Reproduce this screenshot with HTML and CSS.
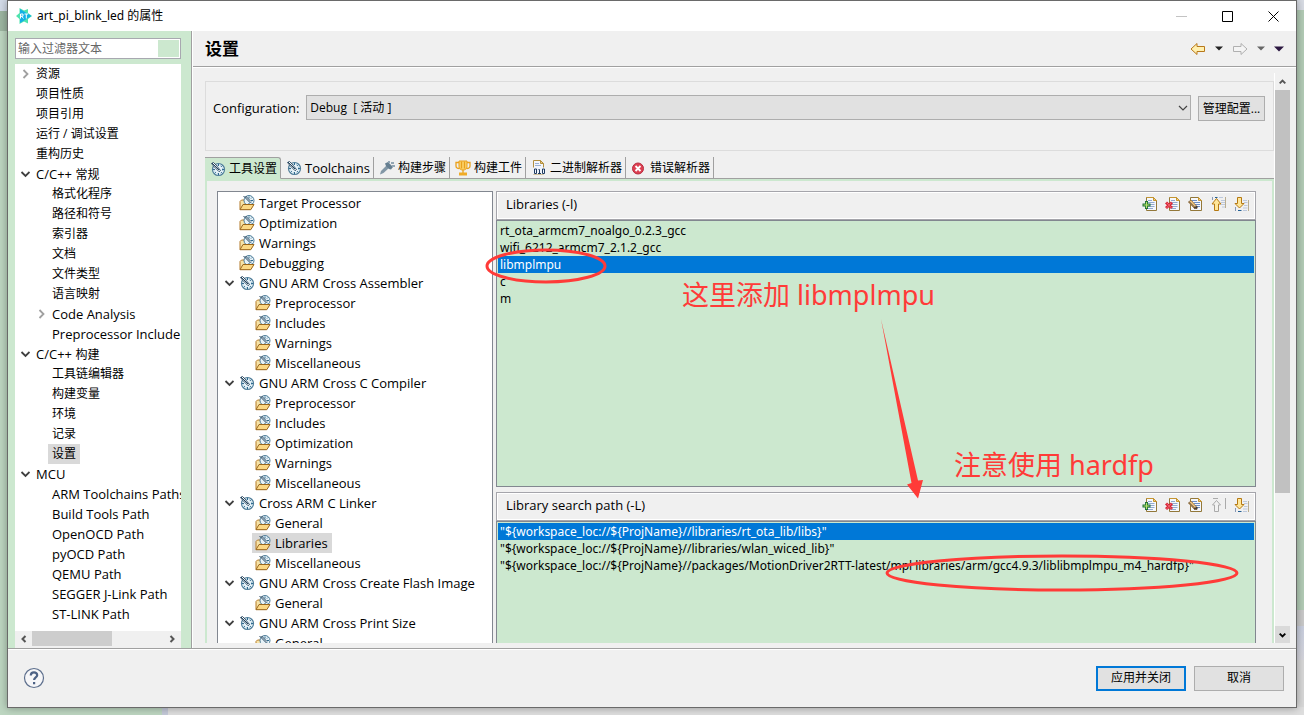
FILE: index.html
```html
<!DOCTYPE html>
<html lang="zh-CN">
<head>
<meta charset="utf-8">
<title>art_pi_blink_led 的属性</title>
<link rel="stylesheet" href="styles.css">
</head>
<body>
<svg class="defs" aria-hidden="true">
  <defs>
    <symbol id="i-tool" viewBox="0 0 16 16">
      <circle cx="8.500" cy="8.500" r="6" fill="#e6f2f8" stroke="#4f7d99" stroke-width="1.200" />
      <circle cx="8.500" cy="8.500" r="4.200" fill="none" stroke="#8db4ca" stroke-dasharray="1.500 1.500" />
      <path d="M8.500 3v2M14 8.500h-2M8.500 14v-2M3 8.500h2M12.400 4.600l-1.200 1.200M12.400 12.400l-1.200-1.200M4.600 12.400l1.200-1.200" stroke="#2f6b8f" />
      <path d="M1.500 2.500l2-1 2.500 2.500 4.500 5.500-1.500 1.200L4 5.500z" fill="#fff" stroke="#24435c" stroke-width=".9" />
      <path d="M2 2l7 7" stroke="#24435c" />
    </symbol>
    <symbol id="i-folder" viewBox="0 0 16 16">
      <path d="M1 14.500V6.500l1.500-1.500h3l1 2h5v7.500z" fill="#f7e3a7" stroke="#b47a28" />
      <circle cx="10" cy="5.500" r="5" fill="#e6f2f8" stroke="#4f7d99" />
      <path d="M10 1.500v2M14 5.500h-2M10 9.500v-1.500M13 2.500l-1 1M13 8.500l-1-1" stroke="#2f6b8f" />
      <path d="M4.500 1l7 7M6.500 1l5.500 5.500" stroke="#24435c" />
      <path d="M1 14.700L4 9.500h11l-3.200 5.200z" fill="#fbd884" stroke="#9b671e" />
    </symbol>
    <symbol id="i-doc" viewBox="0 0 16 16">
      <path d="M4.500 1.500h7l3 3v10h-10z" fill="#f5f8fd" stroke="#93783a" />
      <path d="M4.500 1.500h7l3 3" fill="none" stroke="#c59531" />
      <path d="M11.500 1.500v3h3z" fill="#f5cf7b" stroke="#c59531" />
      <path d="M6 4.500h4M6 6.500h6.500M6 8.500h6.500M6 10.500h6.500M6 12.500h5" stroke="#92a9cf" />
    </symbol>
    <symbol id="i-add" viewBox="0 0 16 16">
      <use href="#i-doc" />
      <path d="M3 5h3v2.500h2.500v3H6V13H3v-2.500H.5v-3H3z" fill="#1f7136" />
      <path d="M4.500 6v6M1.500 9h6" stroke="#b8e36b" stroke-width="1.200" />
    </symbol>
    <symbol id="i-del" viewBox="0 0 16 16">
      <use href="#i-doc" />
      <path d="M1 6.500l6 5.500M7 6.500l-6 5.500" stroke="#d72537" stroke-width="3" />
      <path d="M1.500 6.500l5 5.500M6.500 6.500l-5 5.500" stroke="#ef6670" />
    </symbol>
    <symbol id="i-edit" viewBox="0 0 16 16">
      <path d="M2.500 1.500h8l3 3v10h-11z" fill="#f5f8fd" stroke="#93783a" />
      <path d="M10.500 1.500v3h3z" fill="#f5cf7b" stroke="#c59531" />
      <path d="M4 4.500h5M6 6.500h6M7 8.500h5M8 10.500h4" stroke="#6f8ec2" />
      <path d="M.5 6L3 4l5 5.500 1 3-3-.5z" fill="#f0c47d" stroke="#8d6530" stroke-width=".8" />
      <path d="M1 5.500L7 11.500M6 12h3v-2z" stroke="#493e35" fill="#493e35" />
    </symbol>
    <symbol id="i-up" viewBox="0 0 16 16">
      <path d="M4 1.500h2.500" stroke="#225f93" />
      <path d="M8 1.500h4M10 4.500h4M10 6.500h4M10 8.500h4M11 11h3" stroke="#bcc8dc" />
      <path d="M14.500 1v11" stroke="#b9ad90" /><path d="M1.500 1v3" stroke="#8798b5" />
      <path d="M5.500 2.500L10 8H7.500v6.500h-4V8H1z" fill="#ffe79a" stroke="#b57912" />
    </symbol>
    <symbol id="i-down" viewBox="0 0 16 16">
      <path d="M4 14.500h3.500" stroke="#225f93" />
      <path d="M9 14.500h4M9 4.500h4M10 6.500h3.500M10 9.500h3.500M9 12h4.500" stroke="#bcc8dc" />
      <path d="M14.500 4v11" stroke="#b9ad90" /><path d="M1.500 11v4" stroke="#8798b5" />
      <path d="M5.500 12L10 7.500H7.500V1.500h-4v6H1z" fill="#ffe79a" stroke="#b57912" />
    </symbol>
    <symbol id="i-updis" viewBox="0 0 16 16">
      <path d="M2 1.500h5M14.500 1v11" stroke="#aaa" />
      <path d="M5.500 3.500L9.500 8H7.500v6.500h-4V8H1.500z" fill="#f2f2f2" stroke="#aaa" />
    </symbol>
    <symbol id="i-open" viewBox="0 0 10 10"><path d="M1.500 3l4 4 4-4" fill="none" stroke="#404040" stroke-width="1.800" /></symbol>
    <symbol id="i-closed" viewBox="0 0 10 10"><path d="M3.500 1l4 4-4 4" fill="none" stroke="#a0a0a0" stroke-width="1.800" /></symbol>
  </defs>
</svg>

<div class="window">
  <header class="titlebar">
    <svg class="logo" viewBox="0 0 16 16" aria-hidden="true">
      <path d="M3.500 0L8 2.500 12 1v4l4 3-4 3v4.500L8 13.500 3.500 16V11L0 8l3.500-3z" fill="#4fe3ae" />
      <path d="M4 1l11.500 7L4 15z" fill="#13b1e6" />
      <path d="M4.500 10.500V6h2.500v2.200H4.500M5.500 8l2 2.500M8.500 6h3.500M10.300 6v4.500" fill="none" stroke="#fff" />
    </svg>
    <span class="title">art_pi_blink_led 的属性</span>
    <div class="winbtns">
      <button class="winbtn" aria-label="最小化"><svg viewBox="0 0 11 11"><path d="M0 5.500h11" stroke="#c3c3c3" /></svg></button>
      <button class="winbtn" aria-label="最大化"><svg viewBox="0 0 11 11"><path d="M.5.500h10v10H.5z" fill="none" stroke="#000" /></svg></button>
      <button class="winbtn" aria-label="关闭"><svg viewBox="0 0 11 11"><path d="M.5.500l10 10M10.500.500l-10 10" stroke="#000" /></svg></button>
    </div>
  </header>

  <div class="middle">
    <nav class="sidebar">
      <div class="filter"><input type="text" placeholder="输入过滤器文本" aria-label="输入过滤器文本"><span class="clear"></span></div>
      <div class="pages">
        <ul class="tree">
          <li><div class="row zh"><svg class="tw"><use href="#i-closed" /></svg><span>资源</span></div></li>
          <li><div class="row zh"><span class="tw"></span><span>项目性质</span></div></li>
          <li><div class="row zh"><span class="tw"></span><span>项目引用</span></div></li>
          <li><div class="row zh"><span class="tw"></span><span>运行 / 调试设置</span></div></li>
          <li><div class="row zh"><span class="tw"></span><span>重构历史</span></div></li>
          <li><div class="row"><svg class="tw"><use href="#i-open" /></svg><span>C/C++ <span class="zh">常规</span></span></div>
            <ul>
              <li><div class="row zh"><span class="tw"></span><span>格式化程序</span></div></li>
              <li><div class="row zh"><span class="tw"></span><span>路径和符号</span></div></li>
              <li><div class="row zh"><span class="tw"></span><span>索引器</span></div></li>
              <li><div class="row zh"><span class="tw"></span><span>文档</span></div></li>
              <li><div class="row zh"><span class="tw"></span><span>文件类型</span></div></li>
              <li><div class="row zh"><span class="tw"></span><span>语言映射</span></div></li>
              <li><div class="row"><svg class="tw"><use href="#i-closed" /></svg><span>Code Analysis</span></div></li>
              <li><div class="row"><span class="tw"></span><span>Preprocessor Include</span></div></li>
            </ul>
          </li>
          <li><div class="row"><svg class="tw"><use href="#i-open" /></svg><span>C/C++ <span class="zh">构建</span></span></div>
            <ul>
              <li><div class="row zh"><span class="tw"></span><span>工具链编辑器</span></div></li>
              <li><div class="row zh"><span class="tw"></span><span>构建变量</span></div></li>
              <li><div class="row zh"><span class="tw"></span><span>环境</span></div></li>
              <li><div class="row zh"><span class="tw"></span><span>记录</span></div></li>
              <li><div class="row zh"><span class="tw"></span><span class="current">设置</span></div></li>
            </ul>
          </li>
          <li><div class="row"><svg class="tw"><use href="#i-open" /></svg><span>MCU</span></div>
            <ul>
              <li><div class="row"><span class="tw"></span><span>ARM Toolchains Paths</span></div></li>
              <li><div class="row"><span class="tw"></span><span>Build Tools Path</span></div></li>
              <li><div class="row"><span class="tw"></span><span>OpenOCD Path</span></div></li>
              <li><div class="row"><span class="tw"></span><span>pyOCD Path</span></div></li>
              <li><div class="row"><span class="tw"></span><span>QEMU Path</span></div></li>
              <li><div class="row"><span class="tw"></span><span>SEGGER J-Link Path</span></div></li>
              <li><div class="row"><span class="tw"></span><span>ST-LINK Path</span></div></li>
            </ul>
          </li>
        </ul>
        <div class="hscroll">
          <svg class="sarrow" viewBox="0 0 16 16"><path d="M10 5L7 8l3 3" /></svg>
          <span class="hthumb"></span>
          <svg class="sarrow" viewBox="0 0 16 16"><path d="M6 5l3 3-3 3" /></svg>
        </div>
      </div>
    </nav>

    <main class="page">
      <div class="pagehead">
        <h1>设置</h1>
        <div class="history">
          <button aria-label="后退"><svg width="16" height="14" viewBox="0 0 16 14"><path d="M1 7l6-5.500V4.500h7.500v5H7v3z" fill="#fff0b0" stroke="#b8781a" stroke-linejoin="round" /></svg></button>
          <button aria-label="后退列表"><svg width="8" height="5" viewBox="0 0 8 5"><path d="M0 .5h8L4 4.500z" fill="#222" /></svg></button>
          <button aria-label="前进"><svg width="16" height="14" viewBox="0 0 16 14"><path d="M15 7L9 1.500V4.500H1.500v5H9v3z" fill="#f4f4f4" stroke="#b0b0b0" stroke-linejoin="round" /></svg></button>
          <button aria-label="前进列表"><svg width="8" height="5" viewBox="0 0 8 5"><path d="M0 .5h8L4 4.500z" fill="#666" /></svg></button>
          <button aria-label="菜单"><svg width="10" height="6" viewBox="0 0 10 6"><path d="M0 .5h10L5 5.500z" fill="#2b1740" /></svg></button>
        </div>
      </div>

      <div class="scrollarea">
        <div class="content">
          <div class="config">
            <label for="cfg">Configuration:</label>
            <div class="combo">
              <select id="cfg"><option>Debug&nbsp; [ 活动 ]</option></select>
              <svg viewBox="0 0 10 10"><path d="M1 3l4 4 4-4" fill="none" stroke="#444" stroke-width="1.200" /></svg>
            </div>
            <button class="btn manage">管理配置...</button>
          </div>

          <div class="tabs" role="tablist">
            <button class="tab active" role="tab"><svg class="ic"><use href="#i-tool" /></svg>工具设置</button>
            <button class="tab latin" role="tab"><svg class="ic"><use href="#i-tool" /></svg>Toolchains</button>
            <button class="tab" role="tab"><svg class="ic" viewBox="0 0 16 16"><path d="M1 14.500l1-3.500 5.500-5.500 2.500 2.500-5.500 5z" fill="#8297a6" /><path d="M6 3.500l3-1.500 5 5-2 2.500-2-.5-3-3z" fill="#667f91" /><path d="M9 1h2v2H9zM12 2h3v2h-3zM13 5h3v2h-3z" fill="#93a6b4" /></svg>构建步骤</button>
            <button class="tab" role="tab"><svg class="ic" viewBox="0 0 16 16"><path d="M4 1h8v5.500c0 2-1.500 3.500-4 3.500S4 8.500 4 6.500z" fill="#fbd36a" stroke="#e9a11d" /><path d="M4 2.500H1v3.500c0 1.500 1 2.500 3.500 2.500M12 2.500h3v3.500c0 1.500-1 2.500-3.500 2.500M6.500 1.500v7M9.500 1.500v7M8 10v3" fill="none" stroke="#e9a11d" stroke-width="1.300" /><path d="M4 12.500h8v3H4z" fill="#f0ac27" /></svg>构建工件</button>
            <button class="tab" role="tab"><svg class="ic" viewBox="0 0 16 16"><path d="M2.500 14.500v-14h7l3 3v11z" fill="#f3f6fb" stroke="#b18e3e" /><path d="M9.500.500v3h3z" fill="#f5cf7b" stroke="#b18e3e" /><path d="M4 3.500h4M4 5.500h6" stroke="#9ab0d2" /><path d="M2 7.500h12.500v7H2z" fill="#eef3fa" /><path d="M3.500 9h2v4.500h-2zM11.500 9h2v4.500h-2zM7.500 9.500h1v4M7 13.500h3" fill="none" stroke="#1f3a60" /></svg>二进制解析器</button>
            <button class="tab" role="tab"><svg class="ic" viewBox="0 0 16 16"><circle cx="7" cy="8.500" r="5.500" fill="#dc4052" stroke="#b92d40" /><path d="M4.500 6l5 5M9.500 6l-5 5" stroke="#fff" stroke-width="1.800" /></svg>错误解析器</button>
          </div>

          <div class="tabbody">
            <ul class="tree tools">
              <li><div class="row"><span class="tw"></span><svg class="ic"><use href="#i-folder" /></svg><span>Target Processor</span></div></li>
              <li><div class="row"><span class="tw"></span><svg class="ic"><use href="#i-folder" /></svg><span>Optimization</span></div></li>
              <li><div class="row"><span class="tw"></span><svg class="ic"><use href="#i-folder" /></svg><span>Warnings</span></div></li>
              <li><div class="row"><span class="tw"></span><svg class="ic"><use href="#i-folder" /></svg><span>Debugging</span></div></li>
              <li><div class="row"><svg class="tw"><use href="#i-open" /></svg><svg class="ic"><use href="#i-tool" /></svg><span>GNU ARM Cross Assembler</span></div>
                <ul>
                  <li><div class="row"><span class="tw"></span><svg class="ic"><use href="#i-folder" /></svg><span>Preprocessor</span></div></li>
                  <li><div class="row"><span class="tw"></span><svg class="ic"><use href="#i-folder" /></svg><span>Includes</span></div></li>
                  <li><div class="row"><span class="tw"></span><svg class="ic"><use href="#i-folder" /></svg><span>Warnings</span></div></li>
                  <li><div class="row"><span class="tw"></span><svg class="ic"><use href="#i-folder" /></svg><span>Miscellaneous</span></div></li>
                </ul>
              </li>
              <li><div class="row"><svg class="tw"><use href="#i-open" /></svg><svg class="ic"><use href="#i-tool" /></svg><span>GNU ARM Cross C Compiler</span></div>
                <ul>
                  <li><div class="row"><span class="tw"></span><svg class="ic"><use href="#i-folder" /></svg><span>Preprocessor</span></div></li>
                  <li><div class="row"><span class="tw"></span><svg class="ic"><use href="#i-folder" /></svg><span>Includes</span></div></li>
                  <li><div class="row"><span class="tw"></span><svg class="ic"><use href="#i-folder" /></svg><span>Optimization</span></div></li>
                  <li><div class="row"><span class="tw"></span><svg class="ic"><use href="#i-folder" /></svg><span>Warnings</span></div></li>
                  <li><div class="row"><span class="tw"></span><svg class="ic"><use href="#i-folder" /></svg><span>Miscellaneous</span></div></li>
                </ul>
              </li>
              <li><div class="row"><svg class="tw"><use href="#i-open" /></svg><svg class="ic"><use href="#i-tool" /></svg><span>Cross ARM C Linker</span></div>
                <ul>
                  <li><div class="row"><span class="tw"></span><svg class="ic"><use href="#i-folder" /></svg><span>General</span></div></li>
                  <li><div class="row"><span class="tw"></span><span class="picked"><svg class="ic"><use href="#i-folder" /></svg><span>Libraries</span></span></div></li>
                  <li><div class="row"><span class="tw"></span><svg class="ic"><use href="#i-folder" /></svg><span>Miscellaneous</span></div></li>
                </ul>
              </li>
              <li><div class="row"><svg class="tw"><use href="#i-open" /></svg><svg class="ic"><use href="#i-tool" /></svg><span>GNU ARM Cross Create Flash Image</span></div>
                <ul>
                  <li><div class="row"><span class="tw"></span><svg class="ic"><use href="#i-folder" /></svg><span>General</span></div></li>
                </ul>
              </li>
              <li><div class="row"><svg class="tw"><use href="#i-open" /></svg><svg class="ic"><use href="#i-tool" /></svg><span>GNU ARM Cross Print Size</span></div>
                <ul>
                  <li><div class="row"><span class="tw"></span><svg class="ic"><use href="#i-folder" /></svg><span>General</span></div></li>
                </ul>
              </li>
            </ul>

            <div class="options">
              <section class="option">
                <div class="opthead">
                  <h2>Libraries (-l)</h2>
                  <div class="tools-bar">
                    <button aria-label="添加"><svg class="ic"><use href="#i-add" /></svg></button>
                    <button aria-label="删除"><svg class="ic"><use href="#i-del" /></svg></button>
                    <button aria-label="编辑"><svg class="ic"><use href="#i-edit" /></svg></button>
                    <button aria-label="上移"><svg class="ic"><use href="#i-up" /></svg></button>
                    <button aria-label="下移"><svg class="ic"><use href="#i-down" /></svg></button>
                  </div>
                </div>
                <ul class="list">
                  <li>rt_ota_armcm7_noalgo_0.2.3_gcc</li>
                  <li>wifi_6212_armcm7_2.1.2_gcc</li>
                  <li class="sel">libmplmpu</li>
                  <li>c</li>
                  <li>m</li>
                </ul>
              </section>
              <section class="option">
                <div class="opthead">
                  <h2>Library search path (-L)</h2>
                  <div class="tools-bar">
                    <button aria-label="添加"><svg class="ic"><use href="#i-add" /></svg></button>
                    <button aria-label="删除"><svg class="ic"><use href="#i-del" /></svg></button>
                    <button aria-label="编辑"><svg class="ic"><use href="#i-edit" /></svg></button>
                    <button aria-label="上移" disabled><svg class="ic"><use href="#i-updis" /></svg></button>
                    <button aria-label="下移"><svg class="ic"><use href="#i-down" /></svg></button>
                  </div>
                </div>
                <ul class="list">
                  <li class="sel">"${workspace_loc://${ProjName}//libraries/rt_ota_lib/libs}"</li>
                  <li>"${workspace_loc://${ProjName}//libraries/wlan_wiced_lib}"</li>
                  <li>"${workspace_loc://${ProjName}//packages/MotionDriver2RTT-latest/mpl libraries/arm/gcc4.9.3/liblibmplmpu_m4_hardfp}"</li>
                </ul>
              </section>
            </div>
          </div>
        </div>
        <div class="vscroll">
          <svg class="sarrow" viewBox="0 0 16 16"><path d="M5 10l3-3 3 3" /></svg>
          <span class="vthumb"></span>
          <svg class="sarrow down" viewBox="0 0 16 16"><path d="M5 7l3 3 3-3" /></svg>
        </div>
      </div>
    </main>
  </div>

  <footer class="footer">
    <button class="help" aria-label="帮助"><svg viewBox="0 0 22 22"><circle cx="11" cy="11" r="9.500" fill="#f6f6f8" stroke="#5d6f8d" stroke-width="1.200" /><path d="M7.800 8.500c0-2 1.400-3.200 3.200-3.200s3.200 1.200 3.200 2.900c0 2.200-3.100 2.300-3.100 4.800M11.100 15v2.200" fill="none" stroke="#4d6285" stroke-width="2.200" /></svg></button>
    <div class="actions">
      <button class="btn wide primary">应用并关闭</button>
      <button class="btn wide">取消</button>
    </div>
  </footer>
</div>

<div class="notes">
  <svg width="1304" height="715" viewBox="0 0 1304 715" aria-hidden="true">
    <g fill="none" stroke="#ff3b38" stroke-width="3">
      <ellipse cx="546" cy="266" rx="59" ry="16" />
      <ellipse cx="1062" cy="573" rx="175" ry="17" />
    </g>
    <path d="M881 319L918 480.500l5-.5-5 18.500-11-14 4.500-1.500z" fill="#ff3b38" />
  </svg>
  <p class="note note-add">这里添加 <span>libmplmpu</span></p>
  <p class="note note-fp">注意使用 <span>hardfp</span></p>
</div>
</body>
</html>
```
FILE: styles.css
```css
* { box-sizing: border-box; }

body {
  margin: 0;
  height: 100vh;
  overflow: hidden;
  padding: 0 7px 7px;
  font-family: "Open Sans", "Noto Sans CJK SC", sans-serif;
  font-size: 13px;
  line-height: 18px;
  color: #000;
  background:
    linear-gradient(90deg, #bdd6c1 162px, #c4c9d8 162px, #c4c9d8 168px, #dedede 168px) bottom / 100% 8px no-repeat,
    linear-gradient(#d8dce4 10px, #b3ccb6 10px, #b3ccb6 610px, #cacaca 610px, #cacaca 626px, #c9cfdf 626px, #d5d5dc 660px, #d8d8d8 660px) right / 8px 100% no-repeat,
    linear-gradient(#d3dbe8 11px, #9db5a1 11px, #9db5a1 31px, #bdd6c1 31px) left / 8px 100% no-repeat;
}

ul, p, h1, h2 { margin: 0; padding: 0; list-style: none; font-weight: normal; }
button, input, select { font: inherit; color: inherit; }
button { padding: 0; border: 0; background: none; }
svg { display: block; flex: none; }
.defs { position: absolute; width: 0; height: 0; }
.ic { width: 16px; height: 16px; }
.zh { font-size: 12px; }

.window {
  height: 100%;
  display: flex;
  flex-direction: column;
  background: #f0f0f0;
  border: 1px solid #6a6a6a;
  box-shadow: 0 0 8px rgba(0, 0, 0, .35);
}

.titlebar {
  height: 30px;
  flex: none;
  display: flex;
  align-items: center;
  padding-left: 8px;
  background: #fff;
  font-family: "Noto Sans", "Noto Sans CJK SC", sans-serif;
  font-size: 12px;
}
.logo { width: 16px; height: 16px; }
.title { flex: 1; padding-left: 5px; }
.winbtns { display: flex; }
.winbtn { width: 46px; height: 28px; display: grid; place-items: center; }
.winbtn svg { width: 11px; height: 11px; }

.middle { flex: 1; min-height: 0; display: flex; }
.sidebar {
  width: 184px;
  flex: none;
  display: flex;
  flex-direction: column;
  gap: 5px;
  padding: 7px 10px 0 7px;
  background: #cce8cf;
  border-right: 1px solid #a0a0a0;
}
.filter {
  height: 21px;
  display: flex;
  padding: 1px;
  background: #fff;
  border: 1px solid #a8a8b0;
}
.filter input {
  flex: 1;
  min-width: 0;
  padding: 0 1px;
  border: 0;
  outline: 0;
  background: none;
  font-size: 12px;
}
.filter input::placeholder { color: #666; opacity: 1; }
.clear { width: 21px; background: #cce8cf; }
.pages { flex: 1; min-height: 0; display: flex; flex-direction: column; background: #fff; }
.pages .tree { flex: 1; min-height: 0; overflow: hidden; padding-left: 5px; }
.tree ul { padding-left: 16px; }
.row { height: 20px; display: flex; align-items: center; white-space: nowrap; }
.tw { width: 10px; height: 10px; flex: none; margin-right: 6px; }
.current { background: #d9d9d9; padding: 1px 4px; margin-left: -4px; }

.hscroll { height: 17px; flex: none; display: flex; background: #f0f0f0; }
.sarrow { width: 17px; height: 16px; fill: none; stroke: #555; stroke-width: 2; }
.hthumb { width: 80px; height: 15px; background: #cdcdcd; margin-right: auto; }

.page { flex: 1; min-width: 0; display: flex; flex-direction: column; border-left: 1px solid #fff; }
.pagehead {
  height: 36px;
  flex: none;
  display: flex;
  align-items: center;
  justify-content: space-between;
  padding: 0 12px;
  border-bottom: 1px solid #a0a0a0;
  box-shadow: 0 1px #fff;
}
.pagehead h1 { font-size: 17px; line-height: 24px; font-weight: bold; }
.history { display: flex; align-items: center; gap: 9px; }

.scrollarea { flex: 1; min-height: 0; display: flex; padding: 6px 6px 5px 12px; }
.content {
  flex: 1;
  min-width: 0;
  overflow: hidden;
  display: flex;
  flex-direction: column;
  padding-top: 8px;
  border-right: 1px solid #fff;
}
.config {
  height: 70px;
  flex: none;
  display: flex;
  align-items: flex-start;
  gap: 7px;
  padding: 13px 8px 0 7px;
  border: 1px solid #dcdcdc;
}
.config label { flex: 0 0 84px; line-height: 26px; white-space: nowrap; }
.combo { flex: 1; display: grid; align-items: center; }
.combo select, .combo svg { grid-area: 1 / 1; }
.combo select {
  appearance: none;
  height: 25px;
  width: 100%;
  padding: 0 3px;
  border: 1px solid #adadad;
  border-radius: 0;
  background: #e1e1e1;
  font-size: 12px;
}
.combo svg { width: 10px; height: 10px; justify-self: end; margin-right: 3px; pointer-events: none; }
.btn { background: #e1e1e1; border: 1px solid #adadad; font-size: 12px; }
.manage { width: 67px; height: 25px; margin-top: 1px; white-space: nowrap; }

.tabs { flex: none; display: flex; margin-top: 6px; }
.tabs::after { content: ""; flex: 1; border-bottom: 1px solid #a0a0a0; }
.tab {
  height: 22px;
  display: flex;
  align-items: center;
  gap: 2px;
  padding: 1px 3px 0 5px;
  border-right: 1px solid #a0a0a0;
  border-bottom: 1px solid #a0a0a0;
  font-size: 12px;
  white-space: nowrap;
}
.tab .ic { margin-right: 1px; }
.latin { font-size: 13px; }
.tab.active {
  background: #cce8cf;
  border-top: 1px solid #a0a0a0;
  border-bottom-color: #cce8cf;
  border-top-right-radius: 3px;
}

.tabbody {
  flex: 1;
  min-height: 0;
  display: flex;
  gap: 3px;
  padding: 10px 16px 0 10px;
  border: 2px solid #cce8cf;
  border-bottom: 0;
}
.tools {
  width: 276px;
  flex: none;
  overflow: hidden;
  padding: 1px 0 0 6px;
  background: #fff;
  border: 1px solid #828790;
  border-bottom: 0;
}
.tools .tw { margin-right: 5px; }
.tools .ic { margin-right: 4px; }
.picked { height: 20px; display: flex; align-items: center; background: #d9d9d9; padding: 0 4px 0 3px; margin-left: -3px; }

.options { flex: 1; min-width: 0; overflow: hidden; display: flex; flex-direction: column; gap: 5px; }
.option { flex: none; }
.opthead {
  height: 29px;
  display: flex;
  align-items: center;
  justify-content: space-between;
  padding: 0 5px 3px 9px;
  border: 1px solid #a5a5ab;
  box-shadow: inset 0 0 0 1px #fff;
}
.opthead h2 { font-size: 13px; }
.tools-bar { display: flex; gap: 7px; }
.list {
  height: 267px;
  padding: 1px;
  border: 1px solid #828790;
  background: #cce8cf;
  font-family: "Noto Sans", sans-serif;
  font-size: 12px;
  line-height: 17px;
}
.list li { padding-left: 2px; white-space: nowrap; }
.list .sel { background: #0078d7; color: #fff; }

.vscroll { width: 15px; flex: none; display: flex; flex-direction: column; background: #f0f0f0; }
.vscroll .sarrow { width: 15px; height: 17px; }
.vthumb { flex: 0 0 403px; background: #c1c1c1; margin-bottom: auto; }
.vscroll .down { background: #dadada; stroke: #000; }

.footer {
  height: 59px;
  flex: none;
  display: flex;
  align-items: center;
  justify-content: space-between;
  padding: 0 12px 0 15px;
  border-top: 1px solid #a0a0a0;
  box-shadow: inset 0 1px #fff;
}
.help { width: 22px; height: 22px; }
.actions { display: flex; gap: 8px; }
.wide { width: 90px; height: 25px; }
.primary { border: 2px solid #0078d7; }

.notes { position: absolute; left: 0; top: 0; pointer-events: none; }
.note {
  position: absolute;
  font-family: "Noto Sans", "Noto Sans CJK SC", sans-serif;
  font-size: 27px;
  line-height: 36px;
  color: #ff3b38;
  white-space: nowrap;
}
.note-add { left: 682px; top: 277px; }
.note-fp { left: 954px; top: 447px; }
```
